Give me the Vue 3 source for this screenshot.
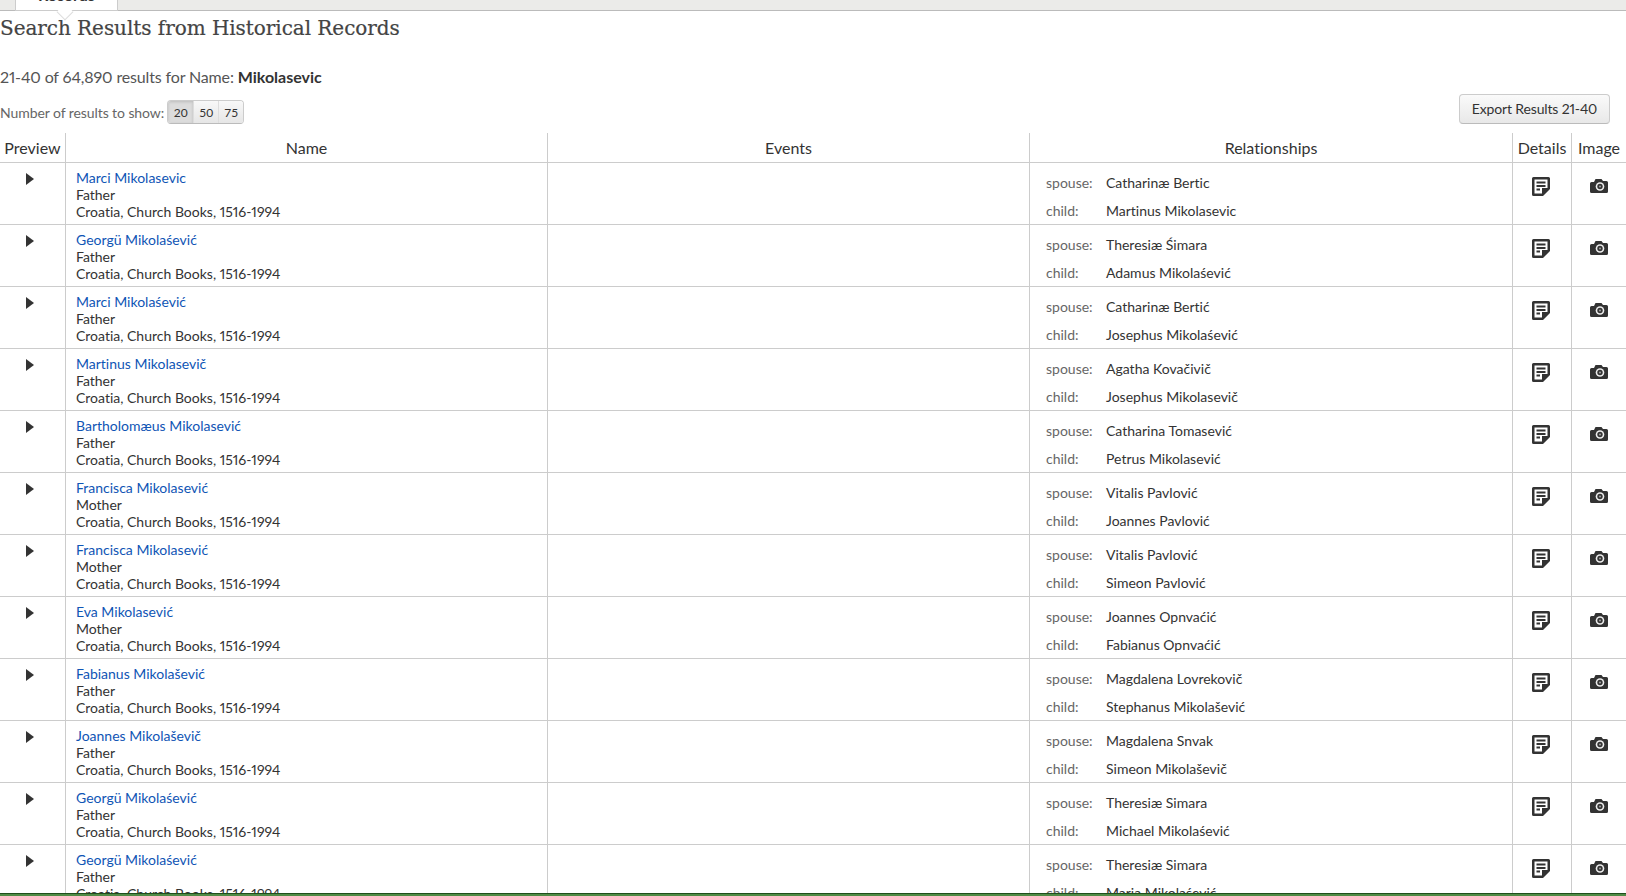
<template>
  <div class="page">
    <div class="tabbar">
      <div class="tab"><span>Records</span></div>
    </div>
    <span class="tab-notch"></span>

    <h1 class="title">Search Results from Historical Records</h1>
    <p class="count">21-40 of 64,890 results for Name: <strong>Mikolasevic</strong></p>

    <div class="controls">
      <div class="per-page">
        <span>Number of results to show:</span>
        <div class="btn-group">
          <button v-for="size in sizes" :key="size" class="size-btn" :class="{ active: size === 20 }">{{ size }}</button>
        </div>
      </div>
      <button class="export">Export Results 21-40</button>
    </div>

    <div class="table">
      <div class="row head">
        <div class="cell">Preview</div>
        <div class="cell">Name</div>
        <div class="cell">Events</div>
        <div class="cell">Relationships</div>
        <div class="cell">Details</div>
        <div class="cell">Image</div>
      </div>
      <div v-for="(rec, i) in records" :key="i" class="row">
        <div class="cell preview"><span class="arrow"></span></div>
        <div class="cell name">
          <a class="link">{{ rec.name }}</a>
          <div>{{ rec.role }}</div>
          <div>Croatia, Church Books, 1516-1994</div>
        </div>
        <div class="cell"></div>
        <div class="cell rel">
          <div class="rel-line"><span class="rel-key">spouse:</span><span>{{ rec.spouse }}</span></div>
          <div class="rel-line"><span class="rel-key">child:</span><span>{{ rec.child }}</span></div>
        </div>
        <div class="cell icon-cell">
          <svg class="doc" width="18" height="19" viewBox="0 0 18 19">
            <path fill="#333" d="M0 1.500A1.500 1.500 0 0 1 1.500 0h15A1.500 1.500 0 0 1 18 1.500V12l-7 7H1.500A1.500 1.500 0 0 1 0 17.500z" />
            <path fill="#fff" d="M2.500 2.500h13V11h-5.500v5.500H2.500z" />
            <path fill="#333" d="M4.500 4.500h9v2h-9zM4.500 8h9v2h-9zM4.500 11.500H8v2H4.500z" />
          </svg>
        </div>
        <div class="cell icon-cell">
          <svg class="cam" width="18" height="14" viewBox="0 0 18 14">
            <path fill="#333" d="M4 3l1.500-3h6L13 2h3.500A1.500 1.500 0 0 1 18 3.500v9a1.500 1.500 0 0 1-1.500 1.500h-15A1.500 1.500 0 0 1 0 12.500v-8A1.500 1.500 0 0 1 1.500 3z" />
            <circle cx="10" cy="7.500" r="4.300" fill="#eee" />
            <circle cx="10" cy="7.500" r="2.700" fill="#333" />
            <circle cx="10" cy="7.500" r="1.100" fill="#999" />
          </svg>
        </div>
      </div>
    </div>
    <div class="footer-line"></div>
  </div>
</template>

<script setup>
const sizes = [20, 50, 75]

const records = [
  { name: 'Marci Mikolasevic', role: 'Father', spouse: 'Catharinæ Bertic', child: 'Martinus Mikolasevic' },
  { name: 'Georgü Mikolaśević', role: 'Father', spouse: 'Theresiæ Śimara', child: 'Adamus Mikolaśević' },
  { name: 'Marci Mikolaśević', role: 'Father', spouse: 'Catharinæ Bertić', child: 'Josephus Mikolaśević' },
  { name: 'Martinus Mikolasevič', role: 'Father', spouse: 'Agatha Kovačivič', child: 'Josephus Mikolasevič' },
  { name: 'Bartholomæus Mikolasević', role: 'Father', spouse: 'Catharina Tomasević', child: 'Petrus Mikolasević' },
  { name: 'Francisca Mikolasević', role: 'Mother', spouse: 'Vitalis Pavlović', child: 'Joannes Pavlović' },
  { name: 'Francisca Mikolasević', role: 'Mother', spouse: 'Vitalis Pavlović', child: 'Simeon Pavlović' },
  { name: 'Eva Mikolasević', role: 'Mother', spouse: 'Joannes Opnvaćić', child: 'Fabianus Opnvaćić' },
  { name: 'Fabianus Mikolašević', role: 'Father', spouse: 'Magdalena Lovrekovič', child: 'Stephanus Mikolašević' },
  { name: 'Joannes Mikolaševič', role: 'Father', spouse: 'Magdalena Snvak', child: 'Simeon Mikolaševič' },
  { name: 'Georgü Mikolaśević', role: 'Father', spouse: 'Theresiæ Simara', child: 'Michael Mikolaśević' },
  { name: 'Georgü Mikolaśević', role: 'Father', spouse: 'Theresiæ Simara', child: 'Maria Mikolaśević' }
]
</script>

<style>
html,
body {
  overflow: hidden;
  background: #fff;
}
</style>

<style scoped>
.page {
  position: relative;
  height: 896px;
  overflow: hidden;
  font-family: "Lato", "Liberation Sans", sans-serif;
  font-size: 14px;
  font-variant-numeric: proportional-nums;
  font-variant-ligatures: none;
  color: #333;
}

.tabbar {
  height: 10px;
  background: #ebebe9;
  border-bottom: 1px solid #bbb;
  padding-left: 15px;
  display: flex;
  align-items: flex-end;
}

.tab {
  width: 101px;
  height: 11px;
  margin-bottom: -1px;
  background: #fff;
  border: 1px solid #ccc;
  border-top: 0;
  overflow: hidden;
  text-align: center;
  font-weight: 700;
  font-size: 16px;
  line-height: 0;
}

.tab span {
  display: block;
  margin-top: -4px;
}

.tab-notch {
  position: absolute;
  left: 59px;
  top: 6px;
  width: 11px;
  height: 11px;
  background: #fff;
  border-right: 1px solid #ddd;
  border-bottom: 1px solid #ddd;
  transform: rotate(45deg);
}

.title {
  position: relative;
  margin: 3px 0 0;
  font-family: "DejaVu Serif", serif;
  font-size: 20px;
  font-weight: 400;
  letter-spacing: -0.05px;
  line-height: 28px;
  color: #444;
  -webkit-text-stroke: 0.2px #444;
}

.count {
  margin: 23px 0 0;
  font-size: 16px;
  letter-spacing: -0.15px;
  line-height: 24px;
  color: #555;
}

.count strong {
  color: #333;
  letter-spacing: 0;
}

.controls {
  margin-top: 8px;
  height: 36px;
  display: flex;
  justify-content: space-between;
  padding-right: 16px;
}

.per-page {
  display: flex;
  align-items: center;
  gap: 3px;
  height: 24px;
  margin-top: 3px;
  color: #666;
  letter-spacing: -0.08px;
}

.btn-group {
  display: flex;
  height: 22px;
  border: 1px solid #ccc;
  border-bottom-color: #bbb;
  border-radius: 4px;
  overflow: hidden;
}

.size-btn {
  width: 25px;
  padding: 0;
  border: 0;
  border-left: 1px solid #ddd;
  background: linear-gradient(#f8f8f8, #e6e6e6);
  font: 12px "Lato", sans-serif;
  color: #333;
}

.size-btn:first-child {
  border-left: 0;
}

.size-btn.active {
  background: #dcdcdc;
  box-shadow: inset 0 1px 3px rgb(0 0 0 / 0.15);
}

.export {
  width: 151px;
  height: 30px;
  margin-top: -3px;
  padding: 0 0 2px;
  border: 1px solid #ccc;
  border-bottom-color: #bbb;
  border-radius: 4px;
  background: linear-gradient(#fafafa, #e8e8e8);
  font: 14px "Lato", sans-serif;
  font-variant-numeric: proportional-nums;
  letter-spacing: -0.15px;
  color: #333;
}

.row {
  display: grid;
  grid-template-columns: 65px 482px 482px 483px 59px 1fr;
  height: 62px;
  border-bottom: 1px solid #ccc;
  box-sizing: border-box;
}

.row.head {
  height: 30px;
  font-size: 16px;
  text-align: center;
  line-height: 30px;
}

.cell {
  border-left: 1px solid #ccc;
  box-sizing: border-box;
}

.cell:first-child {
  border-left: 0;
}

.preview {
  display: flex;
  justify-content: center;
  padding-top: 10px;
  padding-right: 6px;
}

.arrow {
  width: 0;
  height: 0;
  border-left: 8px solid #333;
  border-top: 6px solid transparent;
  border-bottom: 6px solid transparent;
}

.name {
  padding: 6px 0 0 10px;
  line-height: 17px;
}

.link {
  color: #0f55b5;
  display: block;
}

.rel {
  padding: 6px 0 0 16px;
}

.rel-line {
  display: flex;
  height: 28px;
  line-height: 28px;
}

.rel-key {
  width: 60px;
  color: #666;
}

.icon-cell {
  display: flex;
  justify-content: center;
  padding-top: 14px;
}

.doc {
  margin-left: -3px;
}

.cam {
  margin-top: 2px;
}

.footer-line {
  position: absolute;
  left: 0;
  right: 0;
  bottom: 0;
  height: 3px;
  background: linear-gradient(#1f4f1c 1px, #4f8a45 1px);
}
</style>
